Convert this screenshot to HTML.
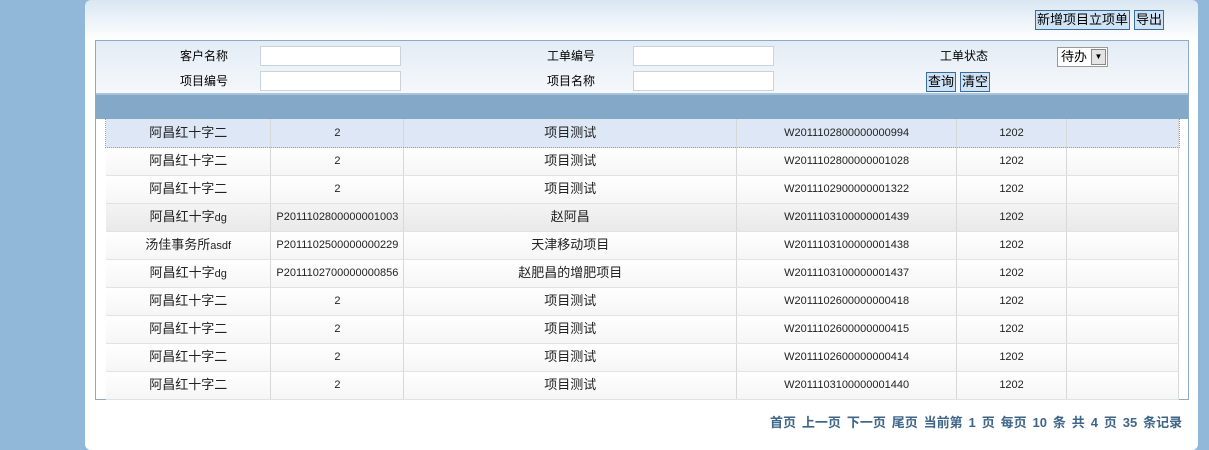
<!DOCTYPE html>
<html><head><meta charset="utf-8"><style>
*{margin:0;padding:0;box-sizing:border-box}
body{width:1209px;height:450px;background:#92b8d9;font-family:"Liberation Sans","Noto Sans CJK SC",sans-serif;font-size:12px;color:#000;position:relative;overflow:hidden}
#panel{position:absolute;left:85px;top:0;width:1113px;height:450px;background:linear-gradient(#d9e6f2,#fff 40px);border-radius:6px}
.abs{position:absolute}
.btn{position:absolute;background:#cfe3f5;border:1px solid #3a6d9a;font-size:13px;line-height:17px;padding:0 1px;height:20px}
#box{position:absolute;left:95px;top:40px;width:1094px;height:360px;border:1px solid #8eabc6;background:#fff}
#search{position:absolute;left:0;top:0;width:1092px;height:52px;background:linear-gradient(#e3ecf5,#f5f8fb)}
.lbl{position:absolute;font-size:12px;line-height:15px}
.inp{position:absolute;width:141px;height:20px;background:#fff;border:1px solid #c9d3dc}
#hbar{position:absolute;left:0;top:52px;width:1092px;height:26px;background:#84a9c8;border-top:2px solid #a9c3da}
table{position:absolute;left:10px;top:78px;border-collapse:collapse;width:1073px}
td{height:28px;line-height:26px;vertical-align:middle;border-right:1px solid #d8d8d8;border-bottom:1px solid #e2e2e2;text-align:center;font-size:11px;color:#222;padding:0}
td.c{font-size:13px}
td.c span{font-size:11px}
tr{background:linear-gradient(#fff,#f6f6f6)}
tr.sel{background:#dde7f5;outline:1px dotted #8aa0c0}
tr.g{background:linear-gradient(#f4f4f4,#e9e9e9)}
#pager{position:absolute;left:770px;top:412px;font-size:13px;font-weight:bold;color:#3f6688;word-spacing:2.3px;white-space:nowrap}
</style></head><body>
<div id="panel"></div>
<div class="btn" style="left:1035px;top:10px">新增项目立项单</div>
<div class="btn" style="left:1134px;top:10px">导出</div>
<div id="box">
<div id="search">
<div class="lbl" style="left:84px;top:8px">客户名称</div>
<div class="inp" style="left:164px;top:5px"></div>
<div class="lbl" style="left:84px;top:33px">项目编号</div>
<div class="inp" style="left:164px;top:30px"></div>
<div class="lbl" style="left:451px;top:8px">工单编号</div>
<div class="inp" style="left:537px;top:5px"></div>
<div class="lbl" style="left:451px;top:33px">项目名称</div>
<div class="inp" style="left:537px;top:30px"></div>
<div class="lbl" style="left:844px;top:8px">工单状态</div>
<div class="abs" style="left:961px;top:6px;width:51px;height:20px;border:1px solid #999;background:#fff;font-size:13px;line-height:17px;padding-left:3px">待办<span style="position:absolute;right:1px;top:1px;width:15px;height:16px;background:#e4e4e4;border:1px solid #888;font-size:8px;line-height:14px;text-align:center">▼</span></div>
<div class="btn" style="left:830px;top:31px">查询</div>
<div class="btn" style="left:864px;top:31px">清空</div>
</div>
<div id="hbar"></div>
<table>
<colgroup><col style="width:165px"><col style="width:133px"><col style="width:333px"><col style="width:220px"><col style="width:110px"><col style="width:112px"></colgroup>
<tr class="sel"><td class="c">阿昌红十字二</td><td>2</td><td class="c">项目测试</td><td>W2011102800000000994</td><td>1202</td><td></td></tr>
<tr><td class="c">阿昌红十字二</td><td>2</td><td class="c">项目测试</td><td>W2011102800000001028</td><td>1202</td><td></td></tr>
<tr><td class="c">阿昌红十字二</td><td>2</td><td class="c">项目测试</td><td>W2011102900000001322</td><td>1202</td><td></td></tr>
<tr class="g"><td class="c">阿昌红十字<span>dg</span></td><td>P2011102800000001003</td><td class="c">赵阿昌</td><td>W2011103100000001439</td><td>1202</td><td></td></tr>
<tr><td class="c">汤佳事务所<span>asdf</span></td><td>P2011102500000000229</td><td class="c">天津移动项目</td><td>W2011103100000001438</td><td>1202</td><td></td></tr>
<tr><td class="c">阿昌红十字<span>dg</span></td><td>P2011102700000000856</td><td class="c">赵肥昌的增肥项目</td><td>W2011103100000001437</td><td>1202</td><td></td></tr>
<tr><td class="c">阿昌红十字二</td><td>2</td><td class="c">项目测试</td><td>W2011102600000000418</td><td>1202</td><td></td></tr>
<tr><td class="c">阿昌红十字二</td><td>2</td><td class="c">项目测试</td><td>W2011102600000000415</td><td>1202</td><td></td></tr>
<tr><td class="c">阿昌红十字二</td><td>2</td><td class="c">项目测试</td><td>W2011102600000000414</td><td>1202</td><td></td></tr>
<tr><td class="c">阿昌红十字二</td><td>2</td><td class="c">项目测试</td><td>W2011103100000001440</td><td>1202</td><td></td></tr>
</table>
</div>
<div id="pager">首页 上一页 下一页 尾页 当前第 1 页 每页 10 条 共 4 页 35 条记录</div>
</body></html>
